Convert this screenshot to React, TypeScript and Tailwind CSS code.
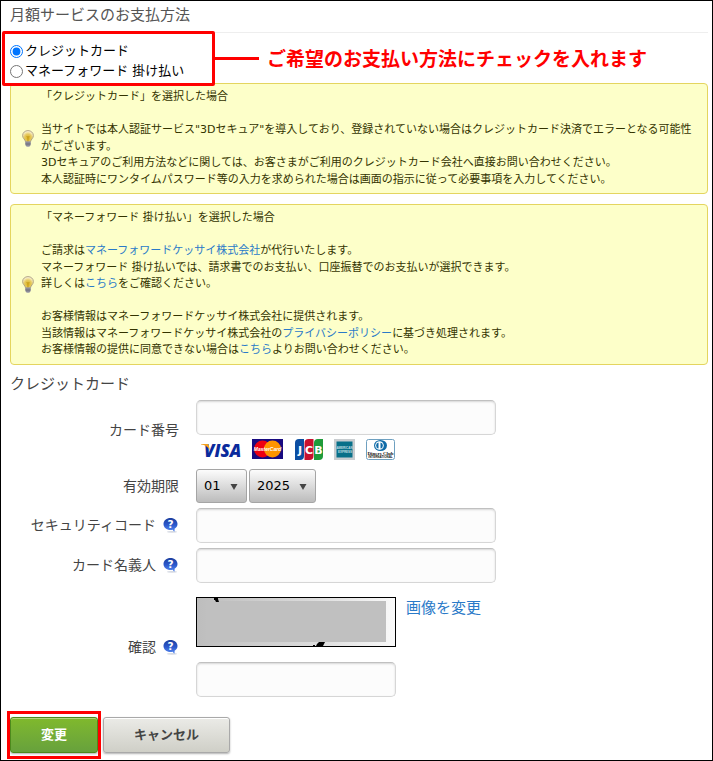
import React, { useState } from "react";

type Method = "card" | "mf";

const FIELD =
  "block h-[35px] rounded-[5px] border border-t-[#c0c0c0] border-x-[#d6d6d6] border-b-[#d6d6d6] bg-[#fcfcfc] px-2 text-[13px] shadow-[inset_0_1px_2px_rgba(0,0,0,0.15)] outline-none";

const LINK = "text-[#2a7ac8] hover:underline";

function BulbIcon() {
  return (
    <svg viewBox="0 0 12 17" className="h-[17px] w-3 flex-shrink-0" aria-hidden="true">
      <defs>
        <radialGradient id="bulb" cx="50%" cy="65%" r="65%">
          <stop offset="0" stopColor="#dcb420" />
          <stop offset="0.5" stopColor="#e6ca60" />
          <stop offset="1" stopColor="#fffdf0" />
        </radialGradient>
      </defs>
      <path
        d="M6 .6C2.900.6.6 2.800.6 5.600c0 2.700 2.500 3.700 2.900 6.200h5c.4-2.500 2.900-3.500 2.900-6.200C11.400 2.800 9.100.6 6 .6z"
        fill="url(#bulb)"
        stroke="#a89a78"
        strokeWidth="0.9"
      />
      <path d="M4.500 6l1 1.500L6 6l.6 1.500L7.500 6M5.500 7.500v4M6.600 7.500v4" stroke="#c49a18" strokeWidth="0.6" fill="none" />
      <path d="M3.300 11.600h5.400v3.200L7.400 16.700H4.600L3.300 14.800z" fill="#9a9aa6" />
      <path d="M3.300 13.200h5.400M3.600 14.800h4.800" stroke="#666674" strokeWidth="0.8" />
    </svg>
  );
}

function HelpIcon() {
  return (
    <svg viewBox="0 0 16 16" className="h-4 w-4" aria-hidden="true">
      <defs>
        <linearGradient id="help" x1="0" y1="0" x2="0" y2="1">
          <stop offset="0" stopColor="#1d3f9e" />
          <stop offset="0.5" stopColor="#2b58cc" />
          <stop offset="1" stopColor="#5b8df2" />
        </linearGradient>
      </defs>
      <ellipse cx="9" cy="14.800" rx="5" ry="0.9" fill="#d5d9e2" />
      <path
        d="M7.500 1C3.500 1 .5 3.600.5 7s3 6 7 6c.8 0 1.500-.1 2.200-.3.6.9 1.100 1.500 1.700 2.100.2-.9.3-1.900.2-3.100C13.400 10.700 14.500 9 14.500 7c0-3.400-3-6-7-6z"
        fill="url(#help)"
      />
      <text x="7.500" y="10.800" textAnchor="middle" fontFamily="DejaVu Sans" fontWeight="bold" fontSize="10.500" fill="#fff">
        ?
      </text>
    </svg>
  );
}

function CardLogos() {
  return (
    <div className="mt-1 flex h-[21px] items-center pl-[5px]">
      <svg viewBox="0 0 48 21" className="h-[21px] w-12 overflow-visible" role="img" aria-label="VISA">
        <text x="3" y="18" fontFamily="Open Sans" fontStyle="italic" fontWeight="800" fontSize="17" fill="#0a2a9c">
          VISA
        </text>
        <path d="M0 5h6.200c1 0 1.400.4 1.600 1.200L9 11.500C7 8 4 6 0 5.600z" fill="#f5a01c" />
      </svg>
      <svg viewBox="0 0 31 20" className="ml-[3px] h-5 w-[31px]" role="img" aria-label="MasterCard">
        <rect width="31" height="20" fill="#180a80" />
        <circle cx="10.500" cy="10" r="8.500" fill="#ee0012" />
        <circle cx="20.500" cy="10" r="8.500" fill="#ff9400" />
        <text x="15.500" y="12" textAnchor="middle" fontFamily="Liberation Sans" fontStyle="italic" fontWeight="bold" fontSize="5" fill="#fff">
          MasterCard
        </text>
      </svg>
      <svg viewBox="0 0 28 21" className="ml-3 h-[21px] w-7" role="img" aria-label="JCB">
        <path d="M4 0h5v17a4 4 0 0 1-4 4H0V4a4 4 0 0 1 4-4z" fill="#0b4ea2" />
        <path d="M13.500 0h5v17a4 4 0 0 1-4 4h-5V4a4 4 0 0 1 4-4z" fill="#c8102e" />
        <path d="M23 0h5v17a4 4 0 0 1-4 4h-5V4a4 4 0 0 1 4-4z" fill="#1f9b3a" />
        <g fontFamily="DejaVu Sans" fontWeight="bold" fontSize="11" fill="#fff" textAnchor="middle">
          <text x="5" y="14.500">J</text>
          <text x="14" y="14.500">C</text>
          <text x="23.500" y="14.500">B</text>
        </g>
      </svg>
      <svg viewBox="0 0 21 21" className="ml-[11px] h-[21px] w-[21px]" role="img" aria-label="American Express">
        <rect width="21" height="21" fill="#c9cdd0" />
        <rect x="2.500" y="2.500" width="16" height="16" fill="#087089" />
        <g fontFamily="Liberation Sans" fontWeight="bold" fontSize="3" fill="#c3dde3" textAnchor="middle">
          <text x="10.500" y="10">AMERICAN</text>
          <text x="11" y="13.500">EXPRESS</text>
        </g>
      </svg>
      <svg viewBox="0 0 29 21" className="ml-[11px] h-[21px] w-[29px]" role="img" aria-label="Diners Club International">
        <rect x="0.500" y="0.500" width="28" height="20" rx="2" fill="#fff" stroke="#6ea0c0" />
        <ellipse cx="14.500" cy="6.500" rx="6.500" ry="5.500" fill="#0f6ba8" />
        <circle cx="13.500" cy="6.500" r="4.300" fill="#fff" />
        <path d="M12.500 3.400a3.200 3.200 0 0 0 0 6.200zM14.500 3.400a3.200 3.200 0 0 1 0 6.200z" fill="#0f6ba8" />
        <text x="14.500" y="16" textAnchor="middle" fontFamily="Liberation Serif" fontWeight="bold" fontSize="5" fill="#111">
          Diners Club
        </text>
        <text x="14.500" y="19" textAnchor="middle" fontFamily="Liberation Sans" fontWeight="bold" fontSize="3" fill="#111">
          INTERNATIONAL
        </text>
      </svg>
    </div>
  );
}

function Captcha() {
  return (
    <svg viewBox="0 0 200 50" className="h-[50px] w-[200px]" role="img" aria-label="確認画像">
      <defs>
        <linearGradient id="captcha" x1="0" y1="0" x2="1" y2="0">
          <stop offset="0" stopColor="#bdbdbd" />
          <stop offset="0.600" stopColor="#dcdcdc" />
          <stop offset="1" stopColor="#fafafa" />
        </linearGradient>
      </defs>
      <rect x="0.500" y="0.500" width="199" height="49" fill="url(#captcha)" stroke="#000" />
      <rect x="10" y="4" width="180" height="41" fill="#c0c0c0" />
      <path d="M18 1h4v1l1 3h-3l-1-2h-1z" fill="#000" />
      <path d="M123 45h6l-1 2-1 2h-7l1-2zM117 48h2v1h-2z" fill="#000" />
    </svg>
  );
}

function Notice({ children }: { children: React.ReactNode }) {
  return (
    <div className="flex items-center gap-[7px] rounded-[4px] border border-[#e4d55f] bg-[#fdffc9] py-[5px] pr-2.5 pl-[11px] text-[11px] leading-normal text-[#333300]">
      <BulbIcon />
      <div>{children}</div>
    </div>
  );
}

interface RowProps {
  label: string;
  htmlFor: string;
  help?: boolean;
  className?: string;
  children: React.ReactNode;
}

function Row({ label, htmlFor, help, className = "", children }: RowProps) {
  return (
    <div className={`flex items-center gap-[17px] ${className}`}>
      <div className="flex w-[169px] flex-shrink-0 items-center justify-end gap-[7px] text-sm">
        <label htmlFor={htmlFor}>{label}</label>
        {help ? (
          <button type="button" aria-label={`${label}のヘルプ`}>
            <HelpIcon />
          </button>
        ) : null}
      </div>
      <div>{children}</div>
    </div>
  );
}

interface PickerProps {
  id: string;
  label: string;
  options: string[];
  value: string;
  onChange: (v: string) => void;
  className: string;
}

function Picker({ id, label, options, value, onChange, className }: PickerProps) {
  return (
    <div className={`relative ${className}`}>
      <select
        id={id}
        aria-label={label}
        value={value}
        onChange={(e) => onChange(e.target.value)}
        className="block h-[34px] w-full appearance-none rounded-[3px] border border-[#a5a5a5] bg-linear-to-b from-[#fcfcfc] to-[#bcbcbc] pl-[7px] text-[13px] text-black"
      >
        {options.map((o) => (
          <option key={o}>{o}</option>
        ))}
      </select>
      <svg viewBox="0 0 8 6" className="pointer-events-none absolute top-[15px] right-[9px] h-1.5 w-2" aria-hidden="true">
        <path d="M.5 0h7L4 6z" fill="#444" />
      </svg>
    </div>
  );
}

const MONTHS = ["01", "02", "03", "04", "05", "06", "07", "08", "09", "10", "11", "12"];
const YEARS = ["2025", "2026", "2027", "2028", "2029", "2030"];

export default function App() {
  const [method, setMethod] = useState<Method>("card");
  const [month, setMonth] = useState("01");
  const [year, setYear] = useState("2025");

  return (
    <main className="border border-black bg-white pr-1 pb-[7px] pl-[9px] font-['DejaVu_Sans','Noto_Sans_CJK_JP',sans-serif] text-[#444]">
      <h1 className="border-b border-[#eee] pt-[3px] pb-1.5 text-[15px] leading-[22px] text-[#555]">月額サービスのお支払方法</h1>

      <form onSubmit={(e) => e.preventDefault()}>
        <div className="relative flex pt-2 pb-[2px] text-[13px] leading-5 text-black">
          <div>
            <label className="flex items-center gap-[2px]">
              <input type="radio" name="method" checked={method === "card"} onChange={() => setMethod("card")} className="h-[13px] w-[13px] accent-[#0075ff]" />
              クレジットカード
            </label>
            <label className="flex items-center gap-[2px]">
              <input type="radio" name="method" checked={method === "mf"} onChange={() => setMethod("mf")} className="h-[13px] w-[13px] accent-[#0075ff]" />
              マネーフォワード 掛け払い
            </label>
          </div>

          {/* callout over the two choices */}
          <div className="pointer-events-none absolute -top-[2px] -left-2 flex items-center">
            <div className="h-[55px] w-[213px] rounded-[2px] border-3 border-[#ff0000]" />
            <div className="h-[3px] w-11 bg-[#ff0000]" />
            <p className="ml-2 text-[19px] leading-7 font-bold whitespace-nowrap text-[#ff0000]">ご希望のお支払い方法にチェックを入れます</p>
          </div>
        </div>

        <div className="flex flex-col gap-2.5">
          <Notice>
            <p>「クレジットカード」を選択した場合</p>
            <br />
            <p>当サイトでは本人認証サービス"3Dセキュア"を導入しており、登録されていない場合はクレジットカード決済でエラーとなる可能性がございます。</p>
            <p>3Dセキュアのご利用方法などに関しては、お客さまがご利用のクレジットカード会社へ直接お問い合わせください。</p>
            <p>本人認証時にワンタイムパスワード等の入力を求められた場合は画面の指示に従って必要事項を入力してください。</p>
          </Notice>

          <Notice>
            <p>「マネーフォワード 掛け払い」を選択した場合</p>
            <br />
            <p>
              ご請求は<a href="#company" className={LINK}>マネーフォワードケッサイ株式会社</a>が代行いたします。
            </p>
            <p>マネーフォワード 掛け払いでは、請求書でのお支払い、口座振替でのお支払いが選択できます。</p>
            <p>
              詳しくは<a href="#detail" className={LINK}>こちら</a>をご確認ください。
            </p>
            <br />
            <p>お客様情報はマネーフォワードケッサイ株式会社に提供されます。</p>
            <p>
              当該情報はマネーフォワードケッサイ株式会社の<a href="#privacy" className={LINK}>プライバシーポリシー</a>に基づき処理されます。
            </p>
            <p>
              お客様情報の提供に同意できない場合は<a href="#contact" className={LINK}>こちら</a>よりお問い合わせください。
            </p>
          </Notice>
        </div>

        <h2 className="pt-2 pb-[5px] text-[15px] leading-[22px]">クレジットカード</h2>

        <div className="flex flex-col gap-[5px]">
          <Row label="カード番号" htmlFor="number" className="pb-1">
            <input id="number" type="text" inputMode="numeric" className={`${FIELD} w-[300px]`} />
            <CardLogos />
          </Row>
          <Row label="有効期限" htmlFor="month">
            <div className="flex gap-[2px]">
              <Picker id="month" label="有効期限（月）" options={MONTHS} value={month} onChange={setMonth} className="w-[51px]" />
              <Picker id="year" label="有効期限（年）" options={YEARS} value={year} onChange={setYear} className="w-[67px]" />
            </div>
          </Row>
          <Row label="セキュリティコード" htmlFor="code" help>
            <input id="code" type="text" inputMode="numeric" className={`${FIELD} w-[300px]`} />
          </Row>
          <Row label="カード名義人" htmlFor="holder" help>
            <input id="holder" type="text" className={`${FIELD} w-[300px]`} />
          </Row>
          <Row label="確認" htmlFor="captcha" help className="mt-[9px]">
            <div className="flex items-start gap-2.5">
              <Captcha />
              <a href="#captcha" className={`${LINK} text-[15px] leading-[22px]`}>画像を変更</a>
            </div>
            <input id="captcha" type="text" className={`${FIELD} mt-[15px] w-[200px]`} />
          </Row>
        </div>

        <div className="mt-5 flex gap-[5px] text-[13px] font-bold">
          <div className="relative">
            <button
              type="submit"
              className="h-9 w-[88px] rounded-[3px] border border-[#4d8a1c] bg-linear-to-b from-[#80b92c] to-[#67a13c] text-white shadow-[inset_0_1px_0_#b3d67c,0_1px_2px_rgba(0,0,0,0.3)]"
            >
              変更
            </button>
            <div className="pointer-events-none absolute -inset-x-[3px] -top-1.5 -bottom-1.5 border-3 border-[#ff0000]" />
          </div>
          <button
            type="button"
            className="h-9 w-[127px] rounded-[3px] border border-[#a9a9a9] bg-linear-to-b from-[#ebebe7] to-[#cfcfc7] text-[#444] shadow-[inset_0_1px_0_#fff,0_1px_2px_rgba(0,0,0,0.3)]"
          >
            キャンセル
          </button>
        </div>
      </form>
    </main>
  );
}
